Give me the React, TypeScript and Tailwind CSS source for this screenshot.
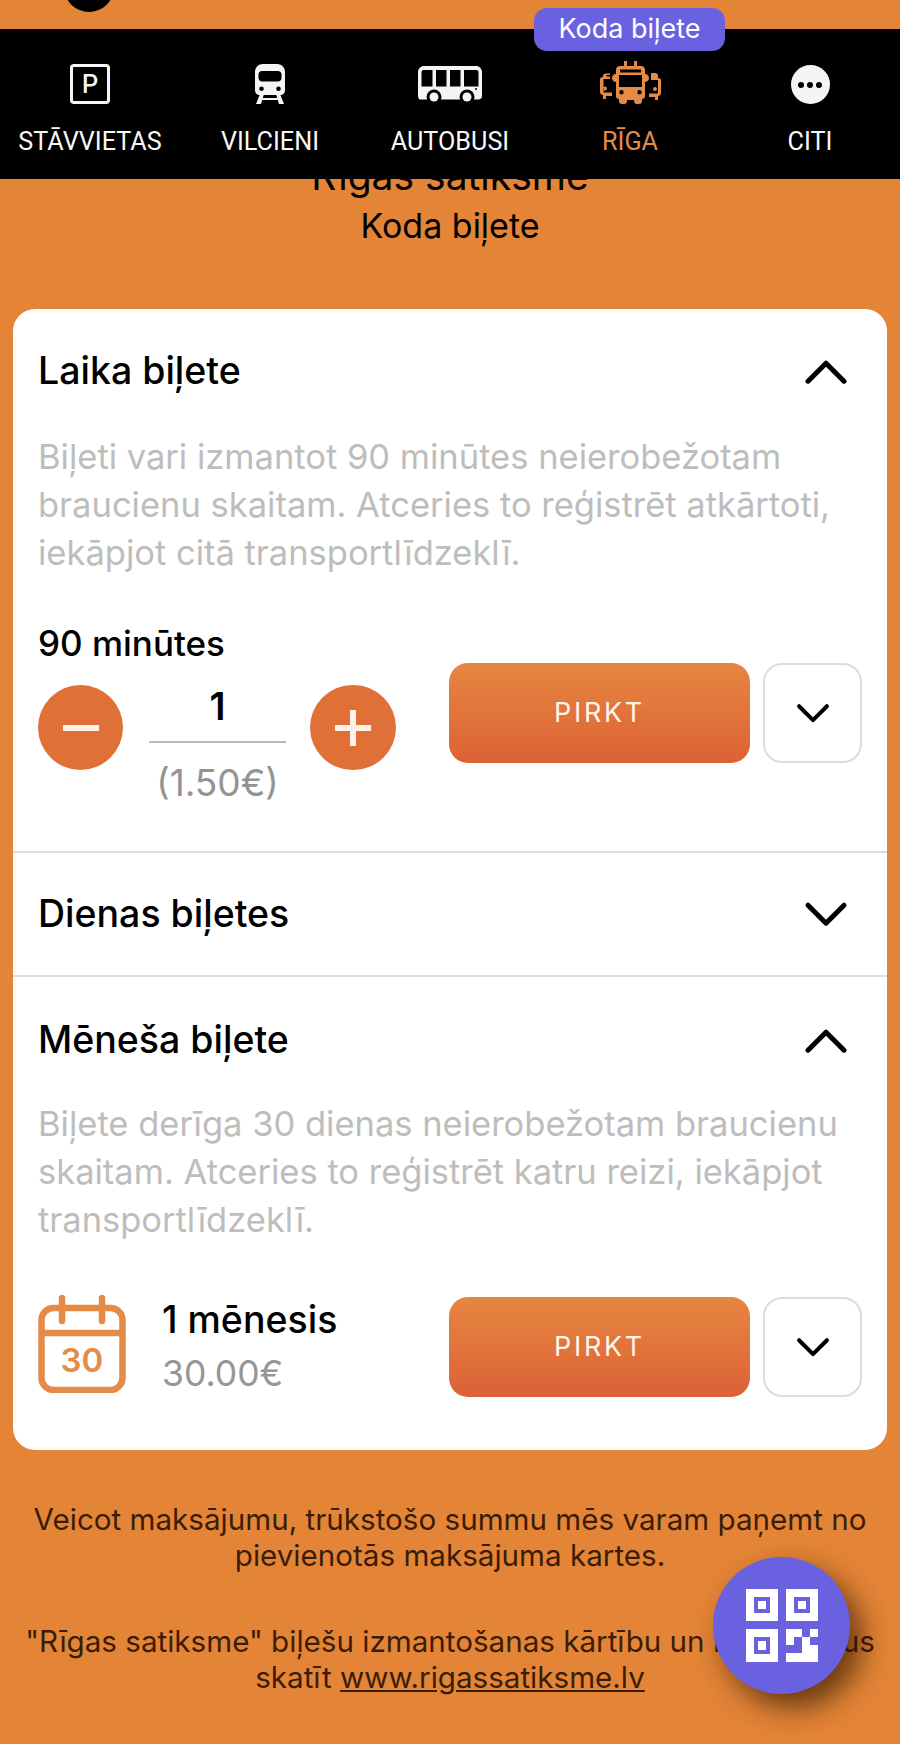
import React from "react";

const Chevron = ({ up, size = 44, sw = 5 }: { up?: boolean; size?: number; sw?: number }) => (
  <svg width={size} height={size * 0.6} viewBox="0 0 44 26" fill="none" stroke="#000" strokeWidth={sw * 44 / size} strokeLinecap="round" strokeLinejoin="round">
    <path d={up ? "M4 23 L22 5 L40 23" : "M4 4 L22 22 L40 4"} />
  </svg>
);

const Train = () => (
  <svg width="30" height="40" viewBox="0 0 30 40" fill="#f5f5f5">
    <path fillRule="evenodd" d="M8 0h14c4.500 0 8 3.500 8 8v18c0 3-2 5-5 5H5c-3 0-5-2-5-5V8c0-4.500 3.500-8 8-8zM7 7c-2 0-3.500 1.500-3.500 3.500v3C3.500 16 5 17.500 7 17.500h16c2 0 3.500-1.500 3.500-3.500v-3.500C26.500 8.500 25 7 23 7zM6.500 22.500a2.300 2.300 0 1 0 0 4.600 2.300 2.300 0 0 0 0-4.600zm17 0a2.300 2.300 0 1 0 0 4.600 2.300 2.300 0 0 0 0-4.600z" />
    <path d="M5 30h4l-3 10H1zM21 30h4l4 10h-5z" />
    <path d="M6 34h18v2H6z" />
  </svg>
);

const Bus = () => (
  <svg width="64" height="38" viewBox="0 0 64 38">
    <path fill="#f5f5f5" fillRule="evenodd" d="M6 0h52c3.300 0 6 2.700 6 6v24c0 2-1.500 3.500-3.500 3.500h-59C1.500 33.500 0 32 0 30V6c0-3.300 2.700-6 6-6zM5.500 4C4.100 4 3.500 5 3.500 6v14.500h11V4zM18 4v16.500h10.500V4zm14 0v16.500h10.500V4zm14 0v16.500h14.500V6c0-1-.6-2-2-2z" />
    <circle cx="16" cy="31" r="7.500" fill="#000" />
    <circle cx="16" cy="31" r="4.500" fill="#f5f5f5" />
    <circle cx="49" cy="31" r="7.500" fill="#000" />
    <circle cx="49" cy="31" r="4.500" fill="#f5f5f5" />
    <circle cx="58" cy="23" r="1" fill="#000" />
  </svg>
);

const Trolley = () => (
  <svg width="63" height="43" viewBox="0 0 63 43" fill="#E38B47">
    <path d="M25 0h3v6h-3zM35 0h3v6h-3z" />
    <path fillRule="evenodd" d="M21 5h21c2.500 0 4 1.500 4 4v4c2.500 0 4 1.800 4 4s-1.500 4-4 4v14c0 2-1 3-3 3v2c0 2-1 3-3 3h-2c-2 0-3-1-3-3v-1H28v1c0 2-1 3-3 3h-2c-2 0-3-1-3-3v-2c-2 0-3-1-3-3V21c-2.500 0-4-1.800-4-4s1.500-4 4-4V9c0-2.500 1.500-4 4-4zM21 8.500v3h21v-3zM20 14v12h23V14zM22.500 29a2.200 2.200 0 1 0 0 4.400 2.200 2.200 0 0 0 0-4.400zm18 0a2.200 2.200 0 1 0 0 4.400 2.200 2.200 0 0 0 0-4.400z" />
    <path fillRule="evenodd" d="M11 10v2.500H7c-2 0-3 1-3 2.500v1C2 16 1 17 1 18.500v12C1 32.500 2 34 4 34v4h3v-3h6v-3.500H4.500V18H11v-2.500H7.500V14H11zM6 25.500a2 2 0 1 0 0 4 2 2 0 0 0 0-4z" />
    <path fillRule="evenodd" d="M52 12h4c2 0 3 1 3 3v2c2 0 3 1 3 2.500v12c0 2-1 3.500-3 3.500v4h-3v-3h-6v-3.500h9V19h-7zM56 26a2 2 0 1 0 0 4 2 2 0 0 0 0-4z" />
  </svg>
);

const Qr = () => (
  <svg width="72" height="73" viewBox="0 0 72 73">
    <g fill="#fff">
      <path fillRule="evenodd" d="M0 0h32v32H0zM8 8v16h16V8z" />
      <path d="M12 12h8v8h-8z" />
      <path fillRule="evenodd" d="M40 0h32v32H40zM48 8v16h16V8z" />
      <path d="M52 12h8v8h-8z" />
      <path fillRule="evenodd" d="M0 40h32v33H0zM8 48v17h16V48z" />
      <path d="M12 52h8v9h-8z" />
      <path d="M40 40h16v8h-8v8h-8zM64 40h8v8h-8zM56 48h8v8h-8zM64 56h8v17H48v-9h8v-8h8zM40 64h8v9h-8z" />
    </g>
  </svg>
);

const Calendar = () => (
  <svg width="88" height="98" viewBox="0 0 88 98" fill="none" stroke="#E38B47" strokeWidth="6.500">
    <rect x="3.500" y="13" width="81" height="82" rx="12" />
    <path d="M3 38h82" />
    <path d="M24 3v23M64 3v23" strokeLinecap="round" />
  </svg>
);

const NavItem = ({ icon, label, active }: { icon: React.ReactNode; label: string; active?: boolean }) => (
  <div className="flex flex-col items-center">
    <div className="h-[43px] flex items-end justify-center">{icon}</div>
    <div className={`mt-[25px] text-[25.200px] leading-[26px] whitespace-nowrap font-['Roboto',sans-serif] ${active ? "text-[#E38B47]" : "text-[#f8f8f8]"}`}>{label}</div>
  </div>
);

const BuyRow = () => (
  <div className="flex gap-[13px]">
    <button className="w-[301px] h-[100px] rounded-[19px] bg-gradient-to-b from-[#E68640] to-[#DC6137] text-[#fff5ea] text-[27px] tracking-[0.1em] flex items-center justify-center">PIRKT</button>
    <button className="w-[99px] h-[100px] rounded-[19px] border-2 border-[#dcdcdc] bg-white flex items-center justify-center">
      <Chevron size={34} sw={4} />
    </button>
  </div>
);

const Section = ({ title, up }: { title: string; up?: boolean }) => (
  <div className="flex items-center justify-between pr-[39px]">
    <h2 className="text-[37.500px] leading-[50px] font-medium text-black">{title}</h2>
    <Chevron up={up} />
  </div>
);

export default function App() {
  return (
    <div className="relative w-[900px] h-[1744px] overflow-hidden bg-[#E38436] font-['Inter',sans-serif]">
      <div className="h-[29px] overflow-hidden">
        <div className="ml-[64px] -mt-[38px] w-[50px] h-[50px] rounded-full bg-black" />
      </div>

      <nav className="relative z-10 h-[150px] bg-black grid grid-cols-5 pt-[32px]">
        <div className="absolute left-[534px] -top-[21px] w-[191px] h-[43px] rounded-[13px] bg-[#6A61E0] flex items-center justify-center text-white text-[27px]">Koda biļete</div>
        <NavItem label="STĀVVIETAS" icon={
          <div className="w-[40px] h-[40px] rounded-[4px] border-[3px] border-[#f5f5f5] flex items-center justify-center text-[#f5f5f5] text-[26px] font-medium leading-none">P</div>
        } />
        <NavItem label="VILCIENI" icon={<Train />} />
        <NavItem label="AUTOBUSI" icon={<Bus />} />
        <NavItem label="RĪGA" active icon={<Trolley />} />
        <NavItem label="CITI" icon={
          <div className="w-[39px] h-[39px] rounded-full bg-[#f5f5f5] flex items-center justify-center gap-[3px]">
            <span className="w-[6px] h-[6px] rounded-full bg-black" />
            <span className="w-[6px] h-[6px] rounded-full bg-black" />
            <span className="w-[6px] h-[6px] rounded-full bg-black" />
          </div>
        } />
      </nav>

      <div className="-mt-[25px] text-center text-black">
        <div className="text-[39px] leading-[44px]">Rīgas satiksme</div>
        <div className="mt-[6px] text-[34px] leading-[44px]">Koda biļete</div>
      </div>

      <main className="mx-[13px] mt-[61px] h-[1141px] rounded-[22px] bg-white">
        <section className="h-[544px] pl-[25px] border-b-2 border-[#dddddd] pt-[37px]">
          <Section title="Laika biļete" up />
          <p className="mt-[37px] pr-[20px] text-[34.500px] leading-[48px] text-[#bdbdbd]">Biļeti vari izmantot 90 minūtes neierobežotam braucienu skaitam. Atceries to reģistrēt atkārtoti, iekāpjot citā transportlīdzeklī.</p>
          <div className="mt-[44px] text-[35px] leading-[44px] font-medium text-black">90 minūtes</div>
          <div className="flex -mt-[2px]">
            <div className="flex items-start w-[411px] pt-[22px]">
              <button className="w-[85px] h-[85px] rounded-full bg-[#E07038] flex items-center justify-center">
                <span className="block w-[36px] h-[6px] bg-[#fff2e8]" />
              </button>
              <div className="w-[137px] ml-[26px] text-center">
                <div className="text-[38px] leading-[36px] h-[58px] pt-[3px] border-b-2 border-[#bbbbbb] font-semibold text-black">1</div>
                <div className="mt-[20px] text-[37px] leading-[40px] text-[#939393]">(1.50€)</div>
              </div>
              <button className="relative ml-[24px] w-[86px] h-[85px] rounded-full bg-[#E07038] flex items-center justify-center">
                <span className="block w-[36px] h-[6px] bg-[#fff2e8]" />
                <span className="absolute block w-[6px] h-[36px] bg-[#fff2e8]" />
              </button>
            </div>
            <BuyRow />
          </div>
        </section>

        <section className="h-[124px] pl-[25px] border-b-2 border-[#dddddd] flex flex-col justify-center">
          <Section title="Dienas biļetes" />
        </section>

        <section className="pl-[25px] pt-[38px]">
          <Section title="Mēneša biļete" up />
          <p className="mt-[35px] pr-[20px] text-[34.500px] leading-[48px] text-[#bdbdbd]">Biļete derīga 30 dienas neierobežotam braucienu skaitam. Atceries to reģistrēt katru reizi, iekāpjot transportlīdzeklī.</p>
          <div className="flex mt-[53px]">
            <div className="flex w-[411px]">
              <div className="relative w-[88px] h-[98px] -mt-[2px]">
                <Calendar />
                <span className="absolute inset-x-0 top-[45px] text-center text-[33px] leading-[40px] font-semibold text-[#E38B47]">30</span>
              </div>
              <div className="ml-[36px]">
                <div className="text-[37.500px] leading-[46px] font-medium text-black">1 mēnesis</div>
                <div className="mt-[8px] text-[35.500px] leading-[46px] text-[#969696]">30.00€</div>
              </div>
            </div>
            <BuyRow />
          </div>
        </section>
      </main>

      <footer className="mt-[51px] px-[20px] text-center text-[29.600px] leading-[36px] text-[#3b1d07]">
        <p>Veicot maksājumu, trūkstošo summu mēs varam paņemt no pievienotās maksājuma kartes.</p>
        <p className="mt-[50px]">"Rīgas satiksme" biļešu izmantošanas kārtību un noteikumus skatīt <span className="underline">www.rigassatiksme.lv</span></p>
      </footer>

      <button className="absolute left-[713px] top-[1557px] w-[137px] h-[137px] rounded-full bg-[#6A61E0] flex items-center justify-center shadow-[12px_14px_28px_rgba(40,20,0,0.65)]">
        <Qr />
      </button>
    </div>
  );
}
